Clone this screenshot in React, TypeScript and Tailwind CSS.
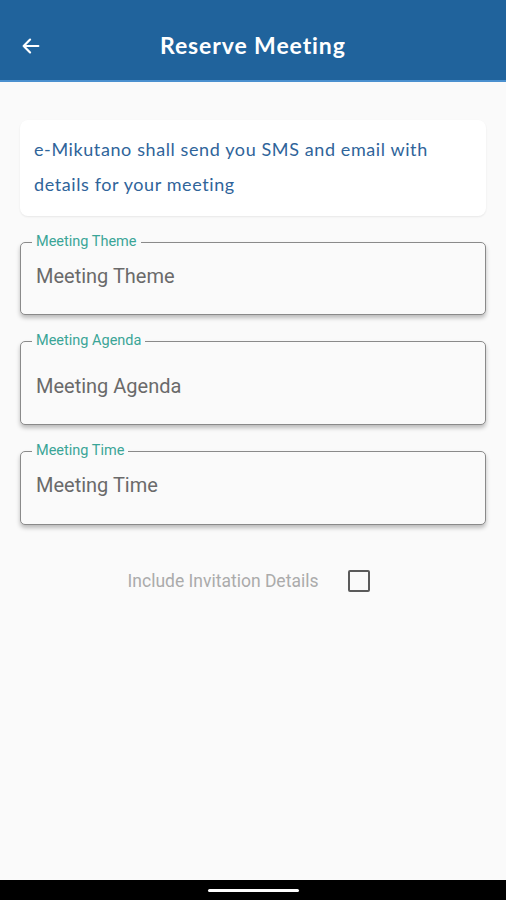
const fields = [
  { label: "Meeting Theme", h: "h-[73px]", pt: "pt-[21px]" },
  { label: "Meeting Agenda", h: "h-[84px]", pt: "pt-[32px]" },
  { label: "Meeting Time", h: "h-[74px]", pt: "pt-[21px]" },
];

function Field({ label, h, pt }: { label: string; h: string; pt: string }) {
  return (
    <div className={`relative ${h} rounded-[5px] border border-[#8a8a8a] bg-[#fafafa] shadow-[0_3px_4px_rgba(0,0,0,0.25)]`}>
      <span className="absolute -top-[10px] left-[11px] bg-[#fafafa] px-[4px] text-[14.5px] leading-[18px] text-[#3aa597] font-['Roboto',sans-serif]">
        {label}
      </span>
      <div className={`${pt} pl-[15px] text-[20px] leading-[24px] text-[#6a6a6a] font-['Roboto',sans-serif]`}>{label}</div>
    </div>
  );
}

export default function App() {
  return (
    <div className="flex h-[900px] w-[506px] flex-col bg-[#fafafa]">
      {/* App bar */}
      <header className="flex h-[82px] items-center border-b-2 border-[#4a90cf] bg-[#20639c] px-[20px] pt-[11px]">
        <svg width="22" height="22" viewBox="0 0 24 24" fill="none" stroke="white" strokeWidth="2.4" strokeLinecap="round" strokeLinejoin="round">
          <path d="M20 12H4M11 5l-7 7 7 7" />
        </svg>
        <h1 className="ml-[118px] text-[23px] font-bold text-white font-['Lato',sans-serif] tracking-[0.9px]">Reserve Meeting</h1>
      </header>

      <main className="flex flex-1 flex-col px-[20px] pt-[38px]">
        <div className="rounded-[8px] bg-white px-[14px] pt-[12px] pb-[14px] shadow-[0_1px_2px_rgba(0,0,0,0.08)]">
          <p className="text-[18px] leading-[35px] tracking-[0.6px] text-[#2f649a] font-['Lato',sans-serif]">
            e-Mikutano shall send you SMS and email with
            <br />
            details for your meeting
          </p>
        </div>

        <div className="mt-[26px] flex flex-col gap-[26px]">
          {fields.map((f) => (
            <Field key={f.label} {...f} />
          ))}
        </div>

        <div className="mt-[43px] flex items-center justify-center gap-[30px] pr-[8px]">
          <span className="text-[17.5px] text-[#ababab] font-['Roboto',sans-serif]">Include Invitation Details</span>
          <div className="h-[22px] w-[22px] rounded-[2px] border-2 border-[#5a5a5a]" />
        </div>
      </main>

      {/* System nav bar */}
      <div className="flex h-[20px] items-center justify-center bg-black">
        <div className="h-[3px] w-[91px] rounded-full bg-white" />
      </div>
    </div>
  );
}
